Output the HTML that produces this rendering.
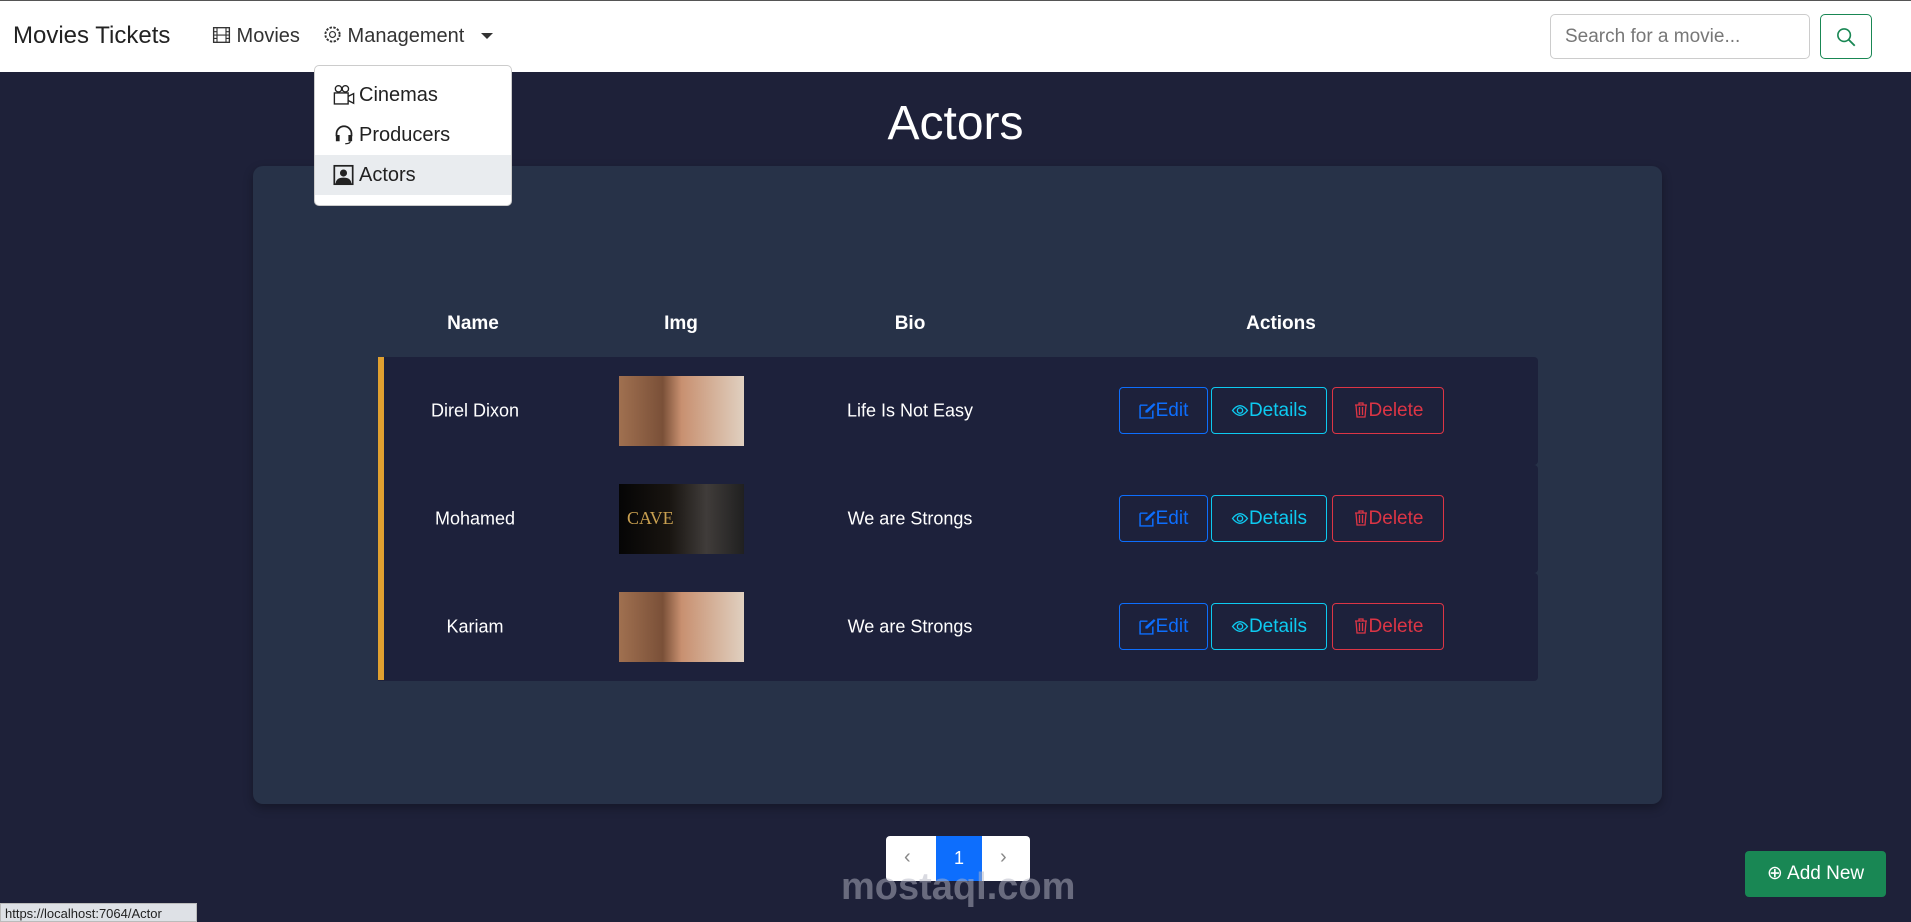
<!DOCTYPE html>
<html><head><meta charset="utf-8"><style>
*{box-sizing:border-box;margin:0;padding:0}
body{width:1911px;height:922px;background:#1e2139;font-family:"Liberation Sans",sans-serif;position:relative;overflow:hidden}
.nav{position:absolute;left:0;top:0;width:1911px;height:72px;background:#fff;border-top:1px solid #555}
.abs{position:absolute}
.nav .t{color:#333;font-size:20px;top:24px}
.dd{left:314px;top:65px;width:198px;height:141px;background:#fff;border:1px solid #ccc;border-radius:5px}
.dd div{position:absolute;left:0;width:196px;height:40px;font-size:20px;color:#222;padding-left:44px;line-height:40px}
.card{left:253px;top:166px;width:1409px;height:638px;background:#273248;border-radius:10px;box-shadow:0 4px 10px rgba(0,0,0,.3)}
.th{top:313px;color:#fff;font-weight:bold;font-size:19px;transform:translateX(-50%)}
.row{left:378px;width:1160px;height:108px;background:#1d213b;border-radius:0 4px 4px 0}
.row .c{position:absolute;color:#fff;font-size:18px;transform:translate(-50%,-50%);top:54px;white-space:nowrap}
.img{position:absolute;left:241px;top:19px;width:125px;height:70px}
.btn{position:absolute;top:30px;height:47px;border:1px solid;border-radius:4px;font-size:19px;line-height:45px;text-align:center}
.btn svg{vertical-align:-3px}
.e{left:741px;width:89px;color:#0d6efd;border-color:#0d6efd}
.d{left:833px;width:116px;color:#0dcaf0;border-color:#0dcaf0}
.x{left:954px;width:112px;color:#dc3545;border-color:#dc3545}
</style></head><body>
<div class="nav">
<div class="abs" style="left:13px;top:21px;font-size:24px;color:#222">Movies Tickets</div>
<div class="abs t" style="left:212px"><svg width="19" height="18" viewBox="0 0 16 16" style="vertical-align:-2px"><rect x="1" y="1.5" width="14" height="13" fill="none" stroke="#333" stroke-width="1.2"/><path d="M4 1.5v13M12 1.5v13M1 5h3M1 8h3M1 11h3M12 5h3M12 8h3M12 11h3M4 8h8" stroke="#333" stroke-width="1"/></svg> Movies</div>
<div class="abs t" style="left:323px"><svg width="19" height="19" viewBox="0 0 16 16" style="vertical-align:-2px"><circle cx="8" cy="8" r="2.5" fill="none" stroke="#333"/><circle cx="8" cy="8" r="6" fill="none" stroke="#333" stroke-width="1.6" stroke-dasharray="2 1.2"/></svg> Management</div>
<div class="abs" style="left:481px;top:32px;border:6px solid transparent;border-top:6px solid #333;border-bottom:0"></div>
<div class="abs" style="left:1550px;top:13px;width:260px;height:45px;border:1px solid #ccc;border-radius:5px;font-size:19px;color:#777;padding:11px 14px">Search for a movie...</div>
<div class="abs" style="left:1820px;top:13px;width:52px;height:45px;border:1px solid #198754;border-radius:5px"><svg width="20" height="20" viewBox="0 0 16 16" style="position:absolute;left:15px;top:12px"><circle cx="6.5" cy="6.5" r="5" fill="none" stroke="#198754" stroke-width="1.3"/><path d="M10.3 10.3L15 15" stroke="#198754" stroke-width="1.5"/></svg></div>
</div>
<div class="abs" style="left:0;right:0;text-align:center;top:96px;font-size:48px;color:#fff">Actors</div>
<div class="abs card"></div>
<div class="abs dd">
<div style="top:9px">Cinemas</div><div style="top:49px">Producers</div><div style="top:89px;background:#e9ecef">Actors</div>
<svg class="abs" style="left:18px;top:18px" width="22" height="22" viewBox="0 0 16 16"><circle cx="4" cy="3.5" r="2.3" fill="none" stroke="#222"/><circle cx="9" cy="3.5" r="2.3" fill="none" stroke="#222"/><rect x="1" y="6.5" width="10" height="8" fill="none" stroke="#222"/><path d="M11 9l4-2v7l-4-2" fill="none" stroke="#222"/></svg>
<svg class="abs" style="left:19px;top:58px" width="20" height="22" viewBox="0 0 16 16"><path d="M2 9V7a6 6 0 0112 0v2" fill="none" stroke="#222" stroke-width="1.4"/><rect x="1.5" y="8" width="3" height="5" fill="#222"/><rect x="11.5" y="8" width="3" height="5" fill="#222"/><path d="M13 13q0 2-4 2" fill="none" stroke="#222"/></svg>
<svg class="abs" style="left:18px;top:98px" width="21" height="22" viewBox="0 0 16 16"><rect x="1" y="1" width="14" height="14" fill="none" stroke="#222" stroke-width="1.3"/><circle cx="8" cy="6.5" r="2.7" fill="#222"/><path d="M2 15q0-5 6-5t6 5z" fill="#222"/></svg>
</div>
<div class="abs th" style="left:473px">Name</div>
<div class="abs th" style="left:681px">Img</div>
<div class="abs th" style="left:910px">Bio</div>
<div class="abs th" style="left:1281px">Actions</div>
<div class="abs row" style="top:357px"><div class="c" style="left:97px">Direl Dixon</div><div class="img" style="background:linear-gradient(90deg,#a07050,#7a5038 35%,#c89070 50%,#e0d0c0)"></div><div class="c" style="left:532px">Life Is Not Easy</div><div class="btn e"><svg width="17" height="17" viewBox="0 0 16 16"><path d="M1 3h7M1 3v12h12V8" fill="none" stroke="#0d6efd" stroke-width="1.4"/><path d="M14 1l1.5 1.5L8 10H6V8z" fill="#0d6efd"/></svg>Edit</div><div class="btn d"><svg width="18" height="17" viewBox="0 0 16 16"><path d="M1 8q7-9 14 0q-7 9-14 0z" fill="none" stroke="#0dcaf0" stroke-width="1.3"/><circle cx="8" cy="8" r="2.5" fill="none" stroke="#0dcaf0" stroke-width="1.3"/></svg>Details</div><div class="btn x"><svg width="16" height="18" viewBox="0 0 16 16"><path d="M2 3h12M6 3V1h4v2M3 3l1 12h8l1-12M6.5 5v8M9.5 5v8" fill="none" stroke="#dc3545" stroke-width="1.3"/></svg>Delete</div></div>
<div class="abs row" style="top:465px"><div class="c" style="left:97px">Mohamed</div><div class="img" style="background:linear-gradient(90deg,#050505,#181410 40%,#403c3a 70%,#202020);color:#c9a050;font-size:18px;padding:24px 8px;font-family:'Liberation Serif',serif">CAVE</div><div class="c" style="left:532px">We are Strongs</div><div class="btn e"><svg width="17" height="17" viewBox="0 0 16 16"><path d="M1 3h7M1 3v12h12V8" fill="none" stroke="#0d6efd" stroke-width="1.4"/><path d="M14 1l1.5 1.5L8 10H6V8z" fill="#0d6efd"/></svg>Edit</div><div class="btn d"><svg width="18" height="17" viewBox="0 0 16 16"><path d="M1 8q7-9 14 0q-7 9-14 0z" fill="none" stroke="#0dcaf0" stroke-width="1.3"/><circle cx="8" cy="8" r="2.5" fill="none" stroke="#0dcaf0" stroke-width="1.3"/></svg>Details</div><div class="btn x"><svg width="16" height="18" viewBox="0 0 16 16"><path d="M2 3h12M6 3V1h4v2M3 3l1 12h8l1-12M6.5 5v8M9.5 5v8" fill="none" stroke="#dc3545" stroke-width="1.3"/></svg>Delete</div></div>
<div class="abs row" style="top:573px"><div class="c" style="left:97px">Kariam</div><div class="img" style="background:linear-gradient(90deg,#a07050,#7a5038 35%,#c89070 50%,#e0d0c0)"></div><div class="c" style="left:532px">We are Strongs</div><div class="btn e"><svg width="17" height="17" viewBox="0 0 16 16"><path d="M1 3h7M1 3v12h12V8" fill="none" stroke="#0d6efd" stroke-width="1.4"/><path d="M14 1l1.5 1.5L8 10H6V8z" fill="#0d6efd"/></svg>Edit</div><div class="btn d"><svg width="18" height="17" viewBox="0 0 16 16"><path d="M1 8q7-9 14 0q-7 9-14 0z" fill="none" stroke="#0dcaf0" stroke-width="1.3"/><circle cx="8" cy="8" r="2.5" fill="none" stroke="#0dcaf0" stroke-width="1.3"/></svg>Details</div><div class="btn x"><svg width="16" height="18" viewBox="0 0 16 16"><path d="M2 3h12M6 3V1h4v2M3 3l1 12h8l1-12M6.5 5v8M9.5 5v8" fill="none" stroke="#dc3545" stroke-width="1.3"/></svg>Delete</div></div>
<div class="abs" style="left:378px;top:357px;width:6px;height:323px;background:#e0a030"></div>
<div class="abs" style="left:886px;top:836px;width:144px;height:45px;background:#fff;border-radius:4px;overflow:hidden"><div class="abs" style="left:50px;width:46px;height:45px;background:#0d6efd;color:#fff;text-align:center;line-height:45px;font-size:18px">1</div><div class="abs" style="left:18px;top:10px;color:#888;font-size:20px">‹</div><div class="abs" style="left:114px;top:10px;color:#888;font-size:20px">›</div></div>
<div class="abs" style="left:841px;top:866px;font-size:38px;color:rgba(180,182,195,.5);font-weight:bold">mostaql.com</div>
<div class="abs" style="left:1745px;top:851px;width:141px;height:46px;background:#198754;border-radius:4px;color:#fff;font-size:19px;line-height:46px;text-align:center">⊕ Add New</div>
<div class="abs" style="left:0;top:903px;width:197px;height:19px;background:#dee1e6;border:1px solid #bbb;font-size:13px;color:#222;padding:2px 4px">https://localhost:7064/Actor</div>
</body></html>
